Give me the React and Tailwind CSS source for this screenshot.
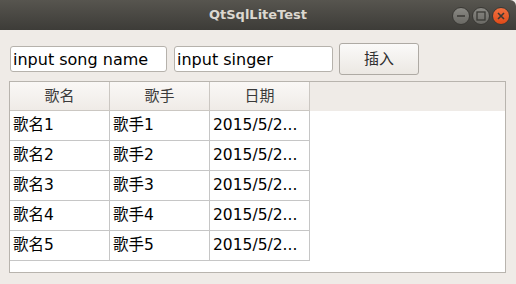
import React from 'react'

const ROWS = [1, 2, 3, 4, 5].map(n => ({ song: `歌名${n}`, singer: `歌手${n}`, date: '2015/5/2...' }))

const FONT = { fontFamily: '"DejaVu Sans", "Noto Sans CJK SC", sans-serif' }

export default function App() {
    return (
        <div className="w-[516px] h-[284px] bg-[#efebe7] flex flex-col overflow-hidden" style={FONT}>
            {/* title bar */}
            <div className="h-[30px] shrink-0 flex items-center justify-center relative rounded-tr-[6px] bg-gradient-to-b from-[#57554f] to-[#3d3c38]">
                <span className="text-[13px] font-bold text-[#dcd8d0]">QtSqlLiteTest</span>
                <div className="absolute right-[6px] top-[7px] flex gap-[2px]">
                    <WinButton>
                        <line x1="5" y1="9" x2="13" y2="9" stroke="#3a3935" strokeWidth="1.5" />
                    </WinButton>
                    <WinButton>
                        <rect x="5" y="5" width="8" height="8" fill="none" stroke="#3a3935" strokeWidth="1.3" />
                    </WinButton>
                    <WinButton close>
                        <path d="M6 6 L12 12 M12 6 L6 12" stroke="#3a3935" strokeWidth="1.6" />
                    </WinButton>
                </div>
            </div>

            {/* input row */}
            <div className="flex items-center pl-[10px] pt-[13px] h-[45px]">
                <input
                    defaultValue="input song name"
                    className="w-[157px] h-[26px] bg-white border border-[#b6b2ac] rounded-[3px] px-[2px] text-[16px] text-black outline-none"
                    style={FONT}
                />
                <input
                    defaultValue="input singer"
                    className="ml-[7px] w-[159px] h-[26px] bg-white border border-[#b6b2ac] rounded-[3px] px-[2px] text-[16px] text-black outline-none"
                    style={FONT}
                />
                <button
                    className="ml-[6px] w-[80px] h-[32px] border border-[#aeaaa4] rounded-[3px] bg-gradient-to-b from-[#fbfaf9] to-[#ece8e3] text-[15px] text-[#2e2e2e]"
                    style={FONT}
                >
                    插入
                </button>
            </div>

            {/* table */}
            <div className="ml-[9px] mt-[6px] w-[497px] h-[192px] shrink-0 border border-[#b8b4ae] bg-white flex flex-col">
                <div className="flex h-[29px] shrink-0 bg-[#efebe7]">
                    {['歌名', '歌手', '日期'].map(h => (
                        <div
                            key={h}
                            className="w-[100px] h-full flex items-center justify-center border-r border-b border-[#cbc7c2] bg-gradient-to-b from-[#faf8f6] to-[#efebe7] text-[15px] text-[#3a3a3a]"
                        >
                            {h}
                        </div>
                    ))}
                </div>
                {ROWS.map(r => (
                    <div key={r.song} className="flex h-[30px] shrink-0">
                        {[r.song, r.singer, r.date].map((c, i) => (
                            <div
                                key={i}
                                className="w-[100px] h-full flex items-center pl-[3px] border-r border-b border-[#c6c6c6] text-[15.5px] text-black whitespace-nowrap overflow-hidden"
                            >
                                {c}
                            </div>
                        ))}
                    </div>
                ))}
            </div>
        </div>
    )
}

function WinButton({ close, children }) {
    return (
        <div
            className={
                close
                    ? 'w-[18px] h-[18px] rounded-full bg-gradient-to-b from-[#f2703f] to-[#df4a16] border border-[#3a3935]'
                    : 'w-[18px] h-[18px] rounded-full bg-gradient-to-b from-[#8a8984] to-[#6a6964] border border-[#3a3935]'
            }
        >
            <svg width="16" height="16" viewBox="1 1 16 16">{children}</svg>
        </div>
    )
}
